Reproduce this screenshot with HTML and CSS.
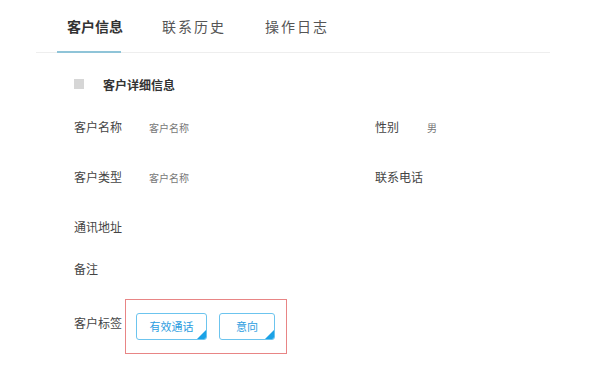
FILE: index.html
```html
<!DOCTYPE html>
<html lang="zh-CN">
<head>
  <meta charset="UTF-8">
  <title>客户信息</title>
  <link rel="stylesheet" href="styles.css">
</head>
<body>
  <div class="tab-bar">
    <div class="tab active">客户信息</div>
    <div class="tab">联系历史</div>
    <div class="tab">操作日志</div>
  </div>

  <div class="detail">
    <div class="section-title">
      <span class="section-mark"></span>
      <h3>客户详细信息</h3>
    </div>

    <div class="row row-first">
      <div class="field">
        <span class="label">客户名称</span>
        <span class="value">客户名称</span>
      </div>
      <div class="field field-right">
        <span class="label">性别</span>
        <span class="value">男</span>
      </div>
    </div>

    <div class="row">
      <div class="field">
        <span class="label">客户类型</span>
        <span class="value">客户名称</span>
      </div>
      <div class="field field-right">
        <span class="label">联系电话</span>
        <span class="value"></span>
      </div>
    </div>

    <div class="row">
      <div class="field">
        <span class="label">通讯地址</span>
      </div>
    </div>

    <div class="row row-short">
      <div class="field">
        <span class="label">备注</span>
      </div>
    </div>

    <div class="tag-row">
      <span class="label">客户标签</span>
      <div class="tag-box">
        <span class="tag tag-wide">有效通话</span>
        <span class="tag tag-narrow">意向</span>
      </div>
    </div>
  </div>
</body>
</html>
```

FILE: styles.css
```css
* {
  margin: 0;
  padding: 0;
  box-sizing: border-box;
}

body {
  width: 592px;
  min-height: 391px;
  background: #fff;
  font-family: "Noto Sans CJK SC", "Noto Sans", sans-serif;
  color: #333;
}

.tab-bar {
  display: flex;
  gap: 39px;
  margin-left: 36px;
  width: 514px;
  height: 53px;
  padding-left: 31px;
  border-bottom: 1px solid #eeeeee;
}

.tab {
  position: relative;
  height: 52px;
  line-height: 52px;
  font-size: 14px;
  color: #555;
  letter-spacing: 2px;
}

.tab.active {
  font-weight: 700;
  color: #333;
  letter-spacing: 0;
}

.tab.active::after {
  content: "";
  position: absolute;
  left: -10px;
  bottom: -1px;
  width: 64px;
  height: 2px;
  background: #8fc4d8;
}

.detail {
  padding-left: 74px;
}

.section-title {
  display: flex;
  align-items: center;
  gap: 19px;
  margin-top: 21px;
  height: 20px;
}

.section-mark {
  width: 10px;
  height: 10px;
  background: #d6d6d6;
}

.section-title h3 {
  font-size: 12px;
  font-weight: 700;
  color: #333;
}

.row {
  display: flex;
  height: 20px;
  margin-top: 30px;
}

.row-first {
  margin-top: 23px;
}

.row-short {
  margin-top: 22px;
}

.field {
  display: flex;
  flex: none;
  align-items: center;
  width: 301px;
}

.field-right {
  width: auto;
}

.field .label {
  width: 75px;
}

.field-right .label {
  width: 52px;
}

.label {
  font-size: 12px;
  line-height: 20px;
  color: #444;
}

.value {
  font-size: 10px;
  color: #777;
}

.tag-row {
  display: flex;
  margin-top: 20px;
}

.tag-row .label {
  width: 51px;
  padding-top: 14px;
}

.tag-box {
  display: flex;
  gap: 12px;
  width: 162px;
  height: 55px;
  padding: 13px 0 0 10px;
  border: 1px solid #e88585;
}

.tag {
  position: relative;
  height: 27px;
  line-height: 25px;
  text-align: center;
  font-size: 11px;
  color: #2b9de0;
  border: 1px solid #6cc4ee;
  border-radius: 3px;
  overflow: hidden;
}

.tag::after {
  content: "";
  position: absolute;
  right: 0;
  bottom: 0;
  border-left: 9px solid transparent;
  border-bottom: 9px solid #1aa2e6;
}

.tag-wide {
  width: 71px;
}

.tag-narrow {
  width: 56px;
}
```
